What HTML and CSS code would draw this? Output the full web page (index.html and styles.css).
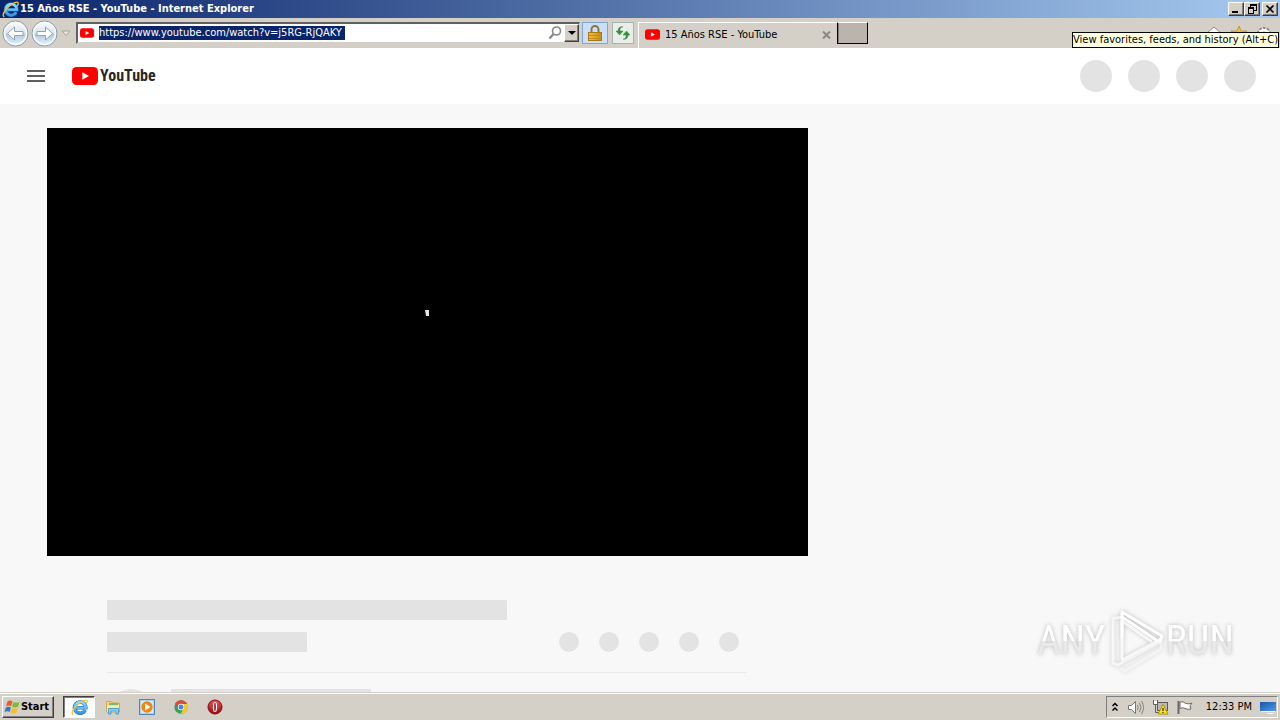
FILE: index.html
```html
<!DOCTYPE html>
<html lang="en">
<head>
  <meta charset="UTF-8" />
  <meta name="viewport" content="width=device-width, initial-scale=1.0"/>
  <title>15 Años RSE - YouTube</title>
  <link rel="stylesheet" href="styles.css">
</head>
<body>
  <svg class="defs" width="0" height="0" aria-hidden="true">
    <defs>
      <linearGradient id="ieBlue" x1="0" y1="0" x2="0" y2="1">
        <stop offset="0" stop-color="#8fdcfc"/>
        <stop offset="1" stop-color="#3a97e2"/>
      </linearGradient>
      <linearGradient id="navFill" x1="0" y1="0" x2="0" y2="1">
        <stop offset="0" stop-color="#fbfcfd"/>
        <stop offset="0.48" stop-color="#dbe5ee"/>
        <stop offset="0.52" stop-color="#b4c9dc"/>
        <stop offset="1" stop-color="#e4f6fd"/>
      </linearGradient>
      <linearGradient id="gold" x1="0" y1="0" x2="1" y2="0">
        <stop offset="0" stop-color="#f5c53c"/>
        <stop offset="1" stop-color="#c98a0c"/>
      </linearGradient>
      <linearGradient id="operaRed" x1="0" y1="0" x2="0" y2="1">
        <stop offset="0" stop-color="#e2585a"/>
        <stop offset="1" stop-color="#9c0910"/>
      </linearGradient>
      <linearGradient id="screenBlue" x1="0" y1="0" x2="1" y2="1">
        <stop offset="0" stop-color="#1b55a8"/>
        <stop offset="1" stop-color="#4b9be8"/>
      </linearGradient>
      <symbol id="ie" viewBox="0 0 16 16">
        <path d="M13.300 10.600a5.300 5.300 0 1 1 .6-2.400H4.800" fill="none" stroke="#1767b5" stroke-width="3.400"/>
        <path d="M13.300 10.600a5.300 5.300 0 1 1 .6-2.400H4.800" fill="none" stroke="url(#ieBlue)" stroke-width="2.400"/>
        <path d="M2.200 14.800C-.4 14 2 9 6.200 5.400 10.400 1.800 14.800-.200 15.200 1.800c.2.900-.2 1.900-.8 2.900" fill="none" stroke="#f2c53d" stroke-width="1.300"/>
      </symbol>
      <symbol id="yt" viewBox="0 0 26 18">
        <rect width="26" height="18" rx="4.500" fill="#f00"/>
        <path d="M10.300 5.200v7.600L17 9z" fill="#fff"/>
      </symbol>
    </defs>
  </svg>

  <header class="titlebar">
    <svg width="17" height="17"><use href="#ie"/></svg>
    <h1>15 Años RSE - YouTube - Internet Explorer</h1>
    <div class="window-buttons">
      <button aria-label="Minimize"><svg width="12" height="10"><path d="M2 7h6v2H2z"/></svg></button>
      <button aria-label="Restore"><svg width="12" height="10"><path d="M4 0h7v7H8v3H2V3h2zM5 2v1h3v3h2V2zM3 5v4h4V5z" fill-rule="evenodd"/></svg></button>
      <button class="close" aria-label="Close"><svg width="12" height="10"><path d="M2.500 1.500l7 7m0-7l-7 7" stroke="#000" stroke-width="1.700"/></svg></button>
    </div>
  </header>

  <nav class="toolbar">
    <div class="nav-buttons">
      <button aria-label="Back"><svg width="27" height="27" viewBox="0 0 27 27"><circle cx="13.500" cy="13.500" r="12.500" fill="url(#navFill)" stroke="#8798a8"/><circle cx="13.500" cy="13.500" r="11" fill="none" stroke="#f8fcff" stroke-width="1.500"/><path d="M5.500 13.500l7-6.500v4.500H21v4h-8.500V20z" fill="#fff" stroke="#8fa3b5"/></svg></button>
      <button aria-label="Forward"><svg width="27" height="27" viewBox="0 0 27 27"><circle cx="13.500" cy="13.500" r="12.500" fill="url(#navFill)" stroke="#8798a8"/><circle cx="13.500" cy="13.500" r="11" fill="none" stroke="#f8fcff" stroke-width="1.500"/><path d="M21.500 13.500l-7-6.500v4.500H6v4h8.500V20z" fill="#fff" stroke="#8fa3b5"/></svg></button>
      <button class="recent" aria-label="Recent pages"><svg width="10" height="7"><path d="M1 1h8L5 5.500z" fill="#e8e6e2" stroke="#a9a59d"/></svg></button>
    </div>
    <div class="address">
      <svg width="14" height="10"><use href="#yt"/></svg>
      <input type="text" aria-label="Address" value="https://www.youtube.com/watch?v=j5RG-RjQAKY" />
      <button class="search" aria-label="Search"><svg width="14" height="14"><circle cx="8.500" cy="5" r="4" fill="#fff" stroke="#868686" stroke-width="1.600"/><path d="M5.500 8L1.500 12.500" stroke="#868686" stroke-width="2.200"/></svg></button>
      <button class="bevel dropdown" aria-label="Show address list"><svg width="8" height="4"><path d="M0 0h8L4 4z"/></svg></button>
    </div>
    <button class="tool lock" aria-label="Security report"><svg width="14" height="17"><path d="M3.500 8V4.500a3.500 3.500 0 0 1 7 0V8" fill="none" stroke="#8c7434" stroke-width="1.900"/><rect x=".5" y="7.500" width="13" height="8" fill="url(#gold)" stroke="#a87814"/><path d="M1 10.500h12M1 13.500h12" stroke="#c08a1c"/></svg></button>
    <button class="tool refresh" aria-label="Refresh"><svg width="14" height="14"><path d="M7 1C4 1 4 3 4 5H7L3.500 9 0 5h2C2 2 4 0 7 1zM7 13c3 0 3-2 3-4H7l3.500-4L14 9h-2c0 3-2 5-5 4z" fill="#329437" stroke="#28782d" stroke-width=".4"/></svg></button>
    <div class="tab">
      <svg width="15" height="11"><use href="#yt"/></svg>
      <a href="#page">15 Años RSE - YouTube</a>
      <button aria-label="Close tab"><svg width="9" height="8"><path d="M1 .5l7 7m0-7l-7 7" stroke="#8b8782" stroke-width="2"/></svg></button>
    </div>
    <button class="new-tab" aria-label="New tab"></button>
    <div class="commands">
      <button aria-label="Home"><svg width="16" height="14"><path d="M1 7l7-6 7 6v1h-2v6H3V8H1z" fill="#fff" stroke="#8c8983"/></svg></button>
      <button aria-label="Favorites"><svg width="16" height="14"><path d="M8 0l2 5h6l-5 4 2 5-5-3-5 3 2-5-5-4h6z" fill="#f3c332" stroke="#b7861f" stroke-width=".7"/></svg></button>
      <button aria-label="Tools"><svg width="16" height="14"><circle cx="8" cy="8" r="6" fill="#fff" stroke="#88857e" stroke-width="2" stroke-dasharray="2.400 1.400"/><circle cx="8" cy="8" r="5" fill="#fff"/><circle cx="8" cy="8" r="2" fill="none" stroke="#88857e"/></svg></button>
      <div class="tooltip" role="tooltip">View favorites, feeds, and history (Alt+C)</div>
    </div>
  </nav>

  <main class="page" id="page">
    <div class="masthead">
      <button aria-label="Guide"><svg width="18" height="12"><path d="M0 0h18v2H0zM0 5h18v2H0zM0 10h18v2H0z" fill="#606060"/></svg></button>
      <a class="logo" href="#page"><svg width="26" height="18"><use href="#yt"/></svg><span>YouTube</span></a>
      <div class="masthead-icons"><i></i><i></i><i></i><i></i></div>
    </div>
    <div class="watch">
      <div class="primary">
        <div class="player"><svg width="5" height="7"><path d="M0 0h4v6H1z" fill="#e4e4e4"/></svg></div>
        <div class="info">
          <div class="bar bar-title"></div>
          <div class="row">
            <div class="bar"></div>
            <div class="actions"><i></i><i></i><i></i><i></i><i></i></div>
          </div>
          <div class="owner">
            <i></i>
            <div class="bar"></div>
          </div>
        </div>
      </div>
    </div>
    <div class="watermark">
      <span>ANY</span>
      <svg width="56" height="64" viewBox="0 0 56 64" fill="none" stroke="#fff" stroke-width="3" stroke-linejoin="round" stroke-linecap="round">
        <path d="M43 32L14 12v39l39-21" stroke-opacity=".8"/>
        <path d="M48 31L14 8"/>
        <path d="M14 28V3l40 24-2 5"/>
        <path d="M14 8L9 9H5v45l5 2L52 33" stroke-opacity=".7"/>
        <path d="M14 60l3 2 36-22V32" stroke-opacity=".5"/>
      </svg>
      <span>RUN</span>
    </div>
  </main>

  <footer class="taskbar">
    <button class="bevel start">
      <svg width="17" height="16"><path d="M3.500 2.500C5.500 1 7 1.500 8.500 2.500L7.200 7.300C5.500 6.300 4 6.300 2 7.300z" fill="#ee5a22"/><path d="M9.500 3c2 1 4 1 6-.3L14.200 7.500c-2 1.300-4 1.300-6 .3z" fill="#7cba36"/><path d="M1.800 8.500c2-1 3.500-1 5.200 0L5.700 13c-1.700-1-3.200-1-5.200 0z" fill="#3478c8"/><path d="M8 9c2 1 4 1 6-.2L12.700 13.500c-2 1.300-4 1.300-6 .2z" fill="#f8bf25"/></svg>
      Start
    </button>
    <div class="apps">
      <button class="active" aria-label="Internet Explorer"><svg width="17" height="17"><use href="#ie"/></svg></button>
      <button aria-label="Explorer"><svg width="16" height="16"><path d="M1.500 2.500h5l1 1.500h7v9h-13z" fill="#f2d877" stroke="#cfa94b"/><path d="M4 4h9v2H4z" fill="#74b97b"/><path d="M2 6.500h12V13H2z" fill="#fbeaa3"/><path d="M3.500 15V9.500h10V15h-2.500v-3H6v3z" fill="#8ccdf0" stroke="#4b9fd0"/></svg></button>
      <button aria-label="Media Player"><svg width="16" height="16"><rect x=".5" y=".5" width="15" height="15" fill="#a9d1f2" stroke="#4888c4"/><rect x="2" y="2" width="12" height="12" fill="#d8ebf9"/><circle cx="8" cy="8" r="5.700" fill="#f0860f"/><path d="M6.200 4.500v7L11.500 8z" fill="#fff"/></svg></button>
      <button aria-label="Chrome"><svg width="14" height="14"><circle cx="7" cy="7" r="6.700" fill="#35a353"/><path d="M1 4A6.700 6.700 0 0 1 13.100 4H7L4.300 8.600z" fill="#e5443a"/><path d="M13.100 4A6.700 6.700 0 0 1 6.600 13.700L9.700 8.500 8 4z" fill="#f9c727"/><circle cx="7" cy="7" r="3.200" fill="#fff"/><circle cx="7" cy="7" r="2.500" fill="#4684e8"/></svg></button>
      <button aria-label="Opera"><svg width="16" height="16"><circle cx="8" cy="8" r="7" fill="url(#operaRed)" stroke="#86070d"/><ellipse cx="8" cy="8" rx="2.200" ry="5" fill="#fff"/><ellipse cx="8" cy="8" rx="1" ry="4.400" fill="#b33438"/></svg></button>
    </div>
    <div class="tray">
      <button aria-label="Show hidden icons"><svg width="8" height="10"><path d="M1.500 4L4 1.500 6.500 4M1.500 8.500L4 6l2.500 2.500" fill="none" stroke="#000" stroke-width="1.500"/></svg></button>
      <button aria-label="Volume"><svg width="17" height="15"><path d="M1.500 5.500h3l4-4v12l-4-4h-3z" fill="#fff" stroke="#77746e"/><path d="M10.500 5q1.500 2.500 0 5M12.500 3q3 4.500 0 9M14.500 1q4 6.500 0 13" fill="none" stroke="#85827b"/></svg></button>
      <button aria-label="Network"><svg width="17" height="16"><rect x="5.500" y="3.500" width="10" height="8" fill="#b8b8b6" stroke="#5b5955"/><path d="M1.500 1v4.500h4V1M3.500 6v7.500H9" fill="none" stroke="#62605b"/><path d="M2 2h3v3H2z" fill="#fff"/><path d="M11 5.500l5 9.500H6z" fill="#ffe21f" stroke="#b69300"/><path d="M10.500 9h1v3h-1zm0 4h1v1h-1z"/></svg></button>
      <button aria-label="Action Center"><svg width="16" height="15"><path d="M1.500 1v13" stroke="#6a6863" stroke-width="2"/><path d="M3 2q3-1 6 1.500 3 1 6-.5l-2 3 1 3q-3 1-6-.5Q6 7 3 8.500z" fill="#fff" stroke="#6e6b66"/></svg></button>
      <time>12:33 PM</time>
      <button aria-label="Show desktop"><svg width="16" height="13"><path d="M0 1h16v9H0z" fill="url(#screenBlue)"/><path d="M1 10.500h14M7 12.500h7" stroke="#eef5fb"/></svg></button>
    </div>
  </footer>
</body>
</html>
```

FILE: styles.css
```css
* {
  box-sizing: border-box;
}
body {
  margin: 0;
  height: 100vh;
  display: flex;
  flex-direction: column;
  overflow: hidden;
  background: #d4d0c8;
  color: #000;
  font-family: Tahoma, "DejaVu Sans Condensed", "DejaVu Sans", sans-serif;
  font-size: 11px;
  line-height: 14px;
}
button {
  display: flex;
  align-items: center;
  justify-content: center;
  padding: 0;
  border: none;
  background: none;
  color: inherit;
  font: inherit;
}
a {
  color: inherit;
  text-decoration: none;
}
svg {
  display: block;
  flex: none;
}
i {
  display: block;
  border-radius: 50%;
  background: #e3e3e3;
}
.defs {
  position: absolute;
}
.bevel,
.window-buttons button {
  background: #d4d0c8;
  border: 1px solid;
  border-color: #fff #404040 #404040 #fff;
  box-shadow: inset -1px -1px #808080;
}

/* window title */
.titlebar {
  flex: none;
  height: 18px;
  display: flex;
  align-items: center;
  gap: 1px;
  padding: 0 2px;
  background: linear-gradient(to right, #0a246a, #a6caf0);
  color: #fff;
}
.titlebar h1 {
  flex: 1;
  margin: 0;
  font-size: 11px;
  font-weight: bold;
}
.window-buttons {
  display: flex;
}
.window-buttons button {
  width: 16px;
  height: 14px;
}
.window-buttons .close {
  margin-left: 2px;
}

/* address bar and tabs */
.toolbar {
  flex: none;
  height: 30px;
  display: flex;
  align-items: flex-start;
  padding: 4px 8px 0 2px;
}
.nav-buttons {
  display: flex;
  align-items: center;
  gap: 2px;
  height: 22px;
  margin-right: 5px;
}
.nav-buttons .recent {
  width: 11px;
}
.address {
  width: 504px;
  height: 22px;
  display: flex;
  align-items: center;
  padding-left: 2px;
  background: #fff;
  border: 2px solid;
  border-color: #606060 #d4d0c8 #d4d0c8 #606060;
  border-right-width: 1px;
}
.address input {
  width: 246px;
  height: 14px;
  margin: 0 auto 0 5px;
  padding: 0;
  border: none;
  outline: none;
  background: #0a246a;
  color: #fff;
  font: inherit;
}
.address .search {
  margin-right: 2px;
}
.address .dropdown {
  width: 15px;
  height: 18px;
}
.tool {
  width: 22px;
  height: 22px;
  border: 1px solid #a9b3ad;
  background: #e9eeea;
}
.lock {
  width: 26px;
  margin: 0 4px 0 2px;
  border-color: #7da7dc;
  background: #c9dffa;
}
.tab {
  width: 199px;
  height: 26px;
  display: flex;
  align-items: center;
  gap: 5px;
  margin-left: 4px;
  padding: 0 6px 2px;
  border: 1px solid #fff;
  border-width: 1px 0 0 1px;
}
.tab a {
  flex: 1;
}
.new-tab {
  width: 31px;
  height: 22px;
  background: #bab4ad;
  border: 1px solid #000;
  border-top-color: #fff;
  box-shadow: inset 1px 0 #808080;
}
.commands {
  position: relative;
  display: flex;
  gap: 9px;
  margin: 4px 0 0 auto;
}
.tooltip {
  position: absolute;
  z-index: 2;
  top: 6px;
  right: -7px;
  height: 16px;
  border: 1px solid #000;
  background: #ffffe1;
  white-space: nowrap;
}

/* page */
.page {
  position: relative;
  flex: 1;
  min-height: 0;
  overflow: hidden;
  background: #f8f8f8;
}
.masthead {
  height: 56px;
  display: flex;
  align-items: center;
  padding: 0 24px 0 27px;
  background: #fff;
}
.logo {
  display: flex;
  align-items: center;
  gap: 2px;
  margin-left: 27px;
  color: #282828;
  font: bold 16px/24px "Roboto Condensed", Roboto, sans-serif;
}
.masthead-icons {
  display: flex;
  gap: 16px;
  margin-left: auto;
}
.masthead-icons i {
  width: 32px;
  height: 32px;
}
.watch {
  display: grid;
  grid-template-columns: minmax(0, 1fr) 401px;
  gap: 24px;
  padding: 24px 47px;
}
.player {
  display: flex;
  align-items: center;
  justify-content: center;
  aspect-ratio: 16 / 9;
  padding-bottom: 58px;
  background: #000;
}
.info {
  max-width: 760px;
  padding: 44px 60px 0;
}
.bar {
  width: 200px;
  height: 20px;
  border-radius: 1px;
  background: #e3e3e3;
}
.bar-title {
  width: 400px;
}
.row {
  display: flex;
  justify-content: space-between;
  padding: 12px 8px 20px 0;
  border-bottom: 1px solid #ebebeb;
}
.actions {
  display: flex;
  gap: 20px;
}
.actions i {
  width: 20px;
  height: 20px;
}
.owner {
  display: flex;
  gap: 16px;
  padding-top: 16px;
}
.owner i {
  width: 48px;
  height: 48px;
}
.watermark {
  position: absolute;
  right: 46px;
  bottom: 19px;
  display: flex;
  align-items: center;
  gap: 2px;
  color: #fff;
  font: 40px/64px "Roboto Condensed", Roboto, sans-serif;
  filter: drop-shadow(0 0 2px #b8b8b8);
}
.watermark span {
  color: transparent;
  background: linear-gradient(#fff 50%, #e9e9e9 50%);
  background-clip: text;
}

/* taskbar */
.taskbar {
  flex: none;
  height: 28px;
  display: flex;
  align-items: center;
  padding: 1px 2px 0;
  border-top: 1px solid #d4d0c8;
  box-shadow: inset 0 1px #fff;
}
.start {
  width: 52px;
  height: 22px;
  padding-right: 3px;
  font-weight: bold;
}
.apps {
  display: flex;
  gap: 2px;
  margin-left: 9px;
}
.apps button {
  width: 32px;
  height: 22px;
}
.apps .active {
  background: #fff;
  border: 1px solid;
  border-color: #404040 #fff #fff #404040;
  box-shadow: inset 1px 1px #808080;
}
.tray {
  height: 22px;
  display: flex;
  align-items: center;
  gap: 8px;
  margin-left: auto;
  padding: 0 1px 0 4px;
  border: 1px solid;
  border-color: #808080 #fff #fff #808080;
}
.tray time {
  margin-left: 5px;
}
```
